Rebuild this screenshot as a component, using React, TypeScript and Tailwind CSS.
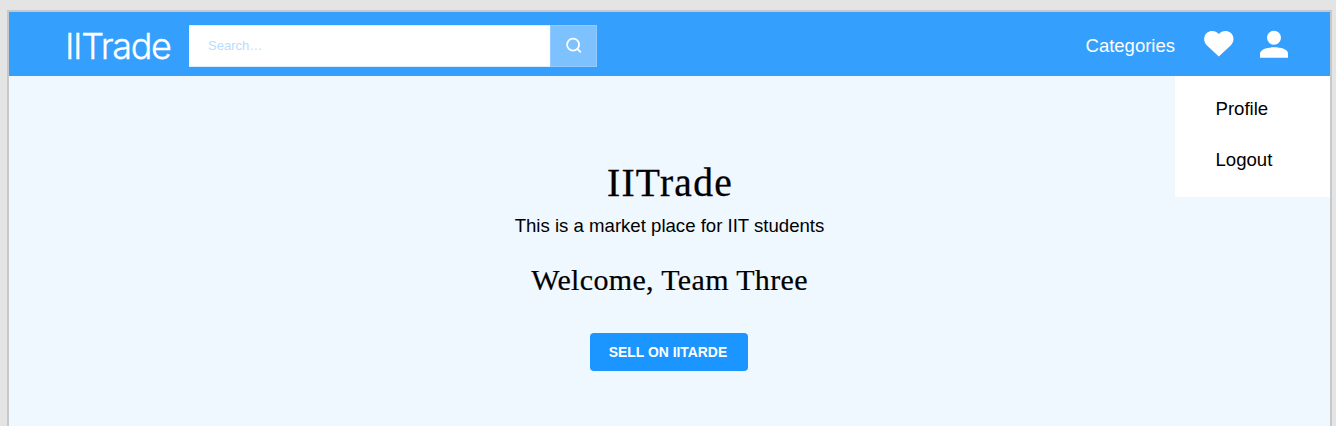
function Header() {
  return (
    <header className="flex h-16 shrink-0 bg-[#349ffd] pl-[56px] text-white">
      <h2 className="w-[124px] whitespace-nowrap pt-[12px] font-['Inter',sans-serif] text-[36px] font-light leading-[44px] tracking-[-1.35px] [-webkit-text-stroke:0.35px_white]">
        IITrade
      </h2>
      <form className="mt-[13px] flex h-[42px] w-[408px]">
        <input
          type="text"
          placeholder="Search…"
          className="min-w-0 flex-1 border-y border-[#d9edff] bg-white pl-[19px] text-[13px] text-black outline-none placeholder:text-[#b8dcff]"
        />
        <button type="button" aria-label="Search" className="flex w-[47px] items-center justify-center border border-[#94cbff] bg-[#7dc1ff]">
          <svg width="18" height="18" viewBox="0 0 18 18" fill="none" stroke="white" strokeWidth="1.8">
            <circle cx="8.1" cy="7.7" r="6" />
            <path d="M12.3 11.9 15.8 15.3" />
          </svg>
        </button>
      </form>
      <nav className="ml-auto flex pr-[41px]">
        <a className="mr-[28px] mt-[20px] text-[18.5px] leading-7">Categories</a>
        <svg className="mr-[25px] mt-[18px]" width="31" height="28" viewBox="0 0 31 28" fill="white">
          <path d="M15.8 26.4 3.7 15.2C.1 11.7.4 5.6 4 2.7 7.7-.1 12.9.6 15.8 3.9 18.7.6 23.9-.1 27.6 2.7 31.2 5.6 31.5 11.7 27.9 15.2Z" />
        </svg>
        <svg className="mt-[18px]" width="30" height="28" viewBox="0 0 30 28" fill="white">
          <circle cx="15" cy="7.7" r="7" />
          <path d="M1 27.8v-4.3C1 15.3 29 15.3 29 23.5V27.8Z" />
        </svg>
      </nav>
    </header>
  );
}

function AccountMenu() {
  return (
    <div className="absolute right-0 top-16 flex h-[121px] w-[155px] flex-col gap-[23px] bg-white pl-[40.5px] pt-[19px] text-[18.6px] leading-7 text-black">
      <a>Profile</a>
      <a>Logout</a>
    </div>
  );
}

export default function App() {
  return (
    <div className="h-[426px] overflow-hidden bg-[#e4e4e4] pl-[7px] pr-[4px] pt-[10px] font-['Liberation_Sans',Arial,sans-serif]">
      <div className="relative flex h-[420px] flex-col border-2 border-[#c8c8c8] bg-[#eff7ff]">
        <Header />
        <AccountMenu />
        <main className="flex flex-col items-center text-black">
          <h1 className="mt-[84px] pl-px font-['Liberation_Serif',serif] text-[39.5px] leading-[46px] tracking-[1.3px] [-webkit-text-stroke:0.3px_black]">
            IITrade
          </h1>
          <p className="mt-[6px] text-[18.6px] leading-7">This is a market place for IIT students</p>
          <h2 className="mt-[22px] font-['Liberation_Serif',serif] text-[30px] leading-[36px] tracking-[0.35px] [-webkit-text-stroke:0.2px_black]">
            Welcome, Team Three
          </h2>
          <button className="mr-px mt-[35px] h-[38px] w-[158px] rounded bg-[#1b95ff] pr-[2px] text-[13.9px] font-bold text-white">
            SELL ON IITARDE
          </button>
        </main>
      </div>
    </div>
  );
}
